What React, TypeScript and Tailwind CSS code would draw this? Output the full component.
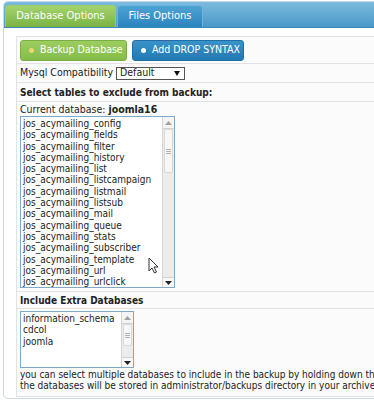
import React from 'react';

const tables = [
  'jos_acymailing_config',
  'jos_acymailing_fields',
  'jos_acymailing_filter',
  'jos_acymailing_history',
  'jos_acymailing_list',
  'jos_acymailing_listcampaign',
  'jos_acymailing_listmail',
  'jos_acymailing_listsub',
  'jos_acymailing_mail',
  'jos_acymailing_queue',
  'jos_acymailing_stats',
  'jos_acymailing_subscriber',
  'jos_acymailing_template',
  'jos_acymailing_url',
  'jos_acymailing_urlclick',
];

const extraDbs = ['information_schema', 'cdcol', 'joomla'];

function FakeScrollbar({ thumb }: { thumb: number }) {
  return (
    <div className="flex flex-col w-[12px] shrink-0 border-l border-[#d6d6d6] bg-[#ececec]">
      <div className="h-[12px] flex items-center justify-center bg-[#f4f4f4] border-b border-[#d0d0d0]">
        <svg width="7" height="4" viewBox="0 0 7 4"><path d="M0 4 L3.5 0 L7 4 Z" fill="#a0a0a0" /></svg>
      </div>
      <div style={{ height: thumb }} className="mx-[1px] flex flex-col items-center justify-center gap-[1px] bg-[#f7f7f7] border border-[#d8d8d8] rounded-[2px]">
        <div className="w-[5px] h-px bg-[#b0b0b0]" />
        <div className="w-[5px] h-px bg-[#b0b0b0]" />
        <div className="w-[5px] h-px bg-[#b0b0b0]" />
      </div>
      <div className="flex-1" />
      <div className="h-[10px] flex items-center justify-center bg-[#f8f8f8] border-t border-[#d0d0d0]">
        <svg width="7" height="4" viewBox="0 0 7 4"><path d="M0 0 L3.5 4 L7 0 Z" fill="#222" /></svg>
      </div>
    </div>
  );
}

export default function App() {
  return (
    <div className="w-[374px] h-[403px] overflow-hidden bg-white font-['DejaVu_Sans_Condensed','DejaVu_Sans',sans-serif] text-[10px] text-[#222]">
      <div className="ml-[3px] mt-[1px] w-[400px] h-[398px] border border-[#c8dae8] rounded-[5px] flex flex-col">
        {/* Tabs */}
        <div className="h-[26px] rounded-t-[4px] bg-gradient-to-b from-[#7dbbde] to-[#4898c8] border-b border-[#3b88b8] flex items-end pl-[1px] gap-[1px]">
          <div className="h-[22px] w-[111px] rounded-t-[4px] bg-gradient-to-b from-[#a4d36d] to-[#7ab343] border border-[#9ccb66] border-b-0 flex items-center justify-center text-white text-[11px] whitespace-nowrap">
            Database Options
          </div>
          <div className="h-[22px] w-[86px] rounded-t-[4px] bg-gradient-to-b from-[#4da3d3] to-[#2a84bd] border border-[#6cb4dc] border-b-0 flex items-center justify-center text-white text-[11px] whitespace-nowrap">
            Files Options
          </div>
        </div>

        <div className="pl-[12px] pt-[8px]">
          <div className="border-l border-t border-[#e2e2e2] bg-[#fbfbfb]">
            {/* Buttons */}
            <div className="h-[27px] flex items-center gap-[5px] pl-[3px] border-b border-[#e2e2e2] whitespace-nowrap">
              <div className="h-[21px] w-[107px] rounded-[3px] bg-gradient-to-b from-[#9ccd5f] to-[#84bc4a] border border-[#7aae42] flex items-center pl-[8px] gap-[6px] text-white text-[10.5px]">
                <span className="w-[5px] h-[5px] rounded-full bg-[#f3d66b]" />
                Backup Database
              </div>
              <div className="h-[21px] w-[112px] rounded-[3px] bg-gradient-to-b from-[#3993c9] to-[#2379b3] border border-[#1f6fa6] flex items-center pl-[8px] gap-[6px] text-white text-[10.5px]">
                <span className="w-[5px] h-[5px] rounded-full bg-white" />
                Add DROP SYNTAX
              </div>
            </div>

            {/* Mysql compat */}
            <div className="h-[19px] flex items-center pl-[3px] border-b border-[#e2e2e2] whitespace-nowrap text-[10.5px]">
              <span className="w-[96px]">Mysql Compatibility</span>
              <div className="h-[13px] w-[69px] border border-[#555] bg-white flex items-center justify-between pl-[3px] pr-[4px]">
                <span>Default</span>
                <svg width="6" height="5" viewBox="0 0 6 5"><path d="M0 0 L6 0 L3 5 Z" fill="#111" /></svg>
              </div>
            </div>

            {/* Heading */}
            <div className="h-[19px] flex items-center pl-[3px] border-b border-[#e2e2e2] font-bold whitespace-nowrap">
              Select tables to exclude from backup:
            </div>

            {/* Tables list */}
            <div className="pl-[3px] pt-[1px] pb-[3px] border-b border-[#e2e2e2]">
              <div className="h-[12px] leading-[12px] whitespace-nowrap text-[10.5px]">
                Current database: <span className="font-bold">joomla16</span>
              </div>
              <div className="relative mt-[1px] w-[155px] h-[172px] border border-[#7fa9c9] bg-white flex">
                <div className="flex-1 pl-[2px] pt-[1px] overflow-hidden">
                  {tables.map((t) => (
                    <div key={t} className="h-[11.3px] leading-[11.3px] whitespace-nowrap">{t}</div>
                  ))}
                </div>
                <FakeScrollbar thumb={44} />
                <svg className="absolute left-[127px] top-[140px]" width="12" height="17" viewBox="0 0 12 17">
                  <path d="M1 1 L1 14 L4 11 L6.5 16 L8.5 15 L6 10 L10 10 Z" fill="#fff" stroke="#333" strokeWidth="1" strokeLinejoin="round" />
                </svg>
              </div>
            </div>

            {/* Extra heading */}
            <div className="h-[17px] flex items-center pl-[3px] border-b border-[#e2e2e2] font-bold whitespace-nowrap">
              Include Extra Databases
            </div>

            {/* Extra list */}
            <div className="pl-[3px] pt-[2px] pb-[5px] border-b border-[#e2e2e2]">
              <div className="w-[114px] h-[57px] border border-[#7fa9c9] bg-white flex">
                <div className="flex-1 pl-[2px] pt-[1px] overflow-hidden">
                  {extraDbs.map((d) => (
                    <div key={d} className="h-[11.3px] leading-[11.3px] whitespace-nowrap">{d}</div>
                  ))}
                </div>
                <FakeScrollbar thumb={22} />
              </div>
              <div className="mt-[1px] leading-[11px] whitespace-nowrap">
                you can select multiple databases to include in the backup by holding down the ctrl key
              </div>
              <div className="leading-[11px] whitespace-nowrap">
                the databases will be stored in administrator/backups directory in your archive
              </div>
            </div>
          </div>
        </div>
      </div>
    </div>
  );
}
